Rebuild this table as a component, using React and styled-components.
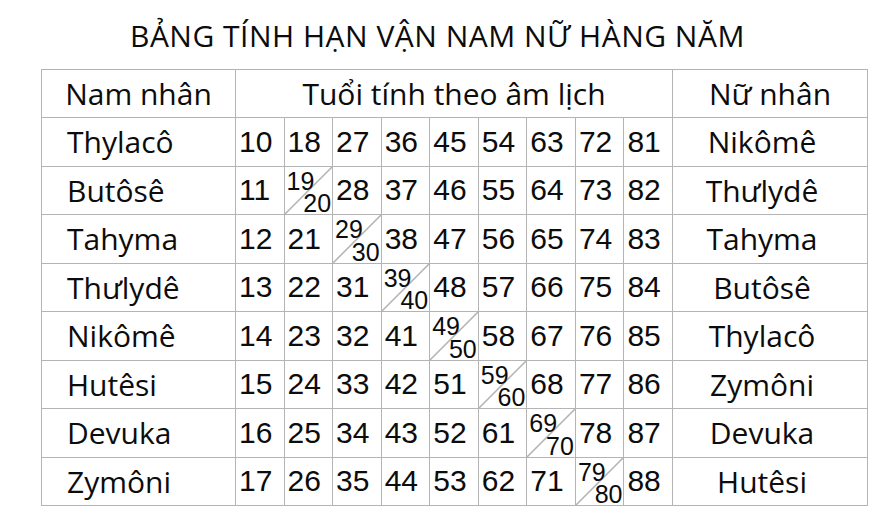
import React from 'react';
import styled, { createGlobalStyle } from 'styled-components';

const GlobalStyle = createGlobalStyle`
  html, body {
    margin: 0;
    background: #fff;
  }
  body {
    font-family: 'Open Sans', 'Noto Sans', sans-serif;
    color: #0c0c0c;
  }
`;

const Page = styled.div`
  width: 888px;
  height: 524px;
  box-sizing: border-box;
  padding: 16px 0 0 41px;
  display: flex;
  flex-direction: column;
  align-items: flex-start;
`;

const Title = styled.h1`
  margin: 0 0 13px 89px;
  font-size: 30px;
  line-height: 40px;
  font-weight: 400;
  letter-spacing: 0.5px;
  white-space: nowrap;
`;

const Grid = styled.div`
  display: grid;
  grid-template-columns: 193px repeat(9, 1fr) 194px;
  grid-template-rows: 47px repeat(8, 1fr);
  width: 827px;
  height: 437px;
  box-sizing: border-box;
  padding: 1px;
  gap: 1px;
  background: #b4b4b4;
`;

const Cell = styled.div`
  background: #fff;
  display: flex;
  align-items: center;
  min-width: 0;
  white-space: nowrap;
`;

const HeadCell = styled(Cell)`
  grid-column: span ${p => p.$span || 1};
  justify-content: center;
  font-size: 30px;
`;

const NameCell = styled(Cell)`
  font-size: 30px;
  justify-content: ${p => (p.$side === 'left' ? 'flex-start' : 'center')};
  padding: ${p => (p.$side === 'left' ? '0 0 0 25px' : '0 16px 0 0')};
`;

const NumCell = styled(Cell)`
  font-family: 'Liberation Sans', Arial, sans-serif;
  font-size: 30px;
  padding-left: 3px;
`;

const SplitCell = styled(Cell)`
  flex-direction: column;
  align-items: stretch;
  justify-content: space-between;
  padding: 4px 1px 0 2px;
  font-family: 'Liberation Sans', Arial, sans-serif;
  font-size: 25px;
  line-height: 21px;
  background: linear-gradient(
    to bottom right,
    #fff calc(50% - 1px),
    #b4b4b4 calc(50% - 0.5px),
    #b4b4b4 calc(50% + 0.5px),
    #fff calc(50% + 1px)
  );
`;

const Part = styled.span`
  align-self: ${p => (p.$end ? 'flex-end' : 'flex-start')};
`;

const maleNames = ['Thylacô', 'Butôsê', 'Tahyma', 'Thưlydê', 'Nikômê', 'Hutêsi', 'Devuka', 'Zymôni'];
const femaleNames = ['Nikômê', 'Thưlydê', 'Tahyma', 'Butôsê', 'Thylacô', 'Zymôni', 'Devuka', 'Hutêsi'];

// tuổi theo hàng r, cột c; ô chéo khi c === r (trừ hàng đầu)
const ageAt = (r, c) => {
  if (c < r) return 9 * c + 10 + r;
  if (c > r) return 9 * c + 9 + r;
  if (r === 0) return 10;
  return [9 * c + 9 + r, 9 * c + 10 + r];
};

export default function App() {
  return (
    <>
      <GlobalStyle />
      <Page>
        <Title>BẢNG TÍNH HẠN VẬN NAM NỮ HÀNG NĂM</Title>
        <Grid>
          <HeadCell>Nam nhân</HeadCell>
          <HeadCell $span={9}>Tuổi tính theo âm lịch</HeadCell>
          <HeadCell>Nữ nhân</HeadCell>
          {maleNames.map((name, r) => (
            <React.Fragment key={r}>
              <NameCell $side="left">{name}</NameCell>
              {Array.from({ length: 9 }, (_, c) => {
                const age = ageAt(r, c);
                if (Array.isArray(age)) {
                  return (
                    <SplitCell key={c}>
                      <Part>{age[0]}</Part>
                      <Part $end>{age[1]}</Part>
                    </SplitCell>
                  );
                }
                return <NumCell key={c}>{age}</NumCell>;
              })}
              <NameCell $side="right">{femaleNames[r]}</NameCell>
            </React.Fragment>
          ))}
        </Grid>
      </Page>
    </>
  );
}
